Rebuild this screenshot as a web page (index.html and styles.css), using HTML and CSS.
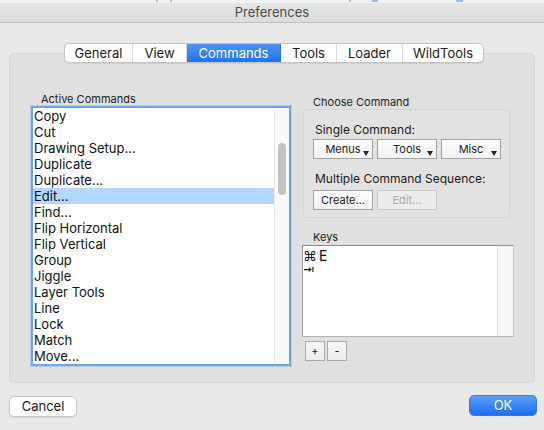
FILE: index.html
```html
<!DOCTYPE html>
<html>
<head>
<meta charset="utf-8">
<link rel="stylesheet" href="styles.css">
</head>
<body>
<div class="strip">
  <span class="bit b1"></span><span class="bit b2"></span><span class="bit b3"></span><span class="bit b4"></span><span class="bit b5"></span>
</div>
<div class="titlebar">Preferences</div>
<div class="tabs">
  <div class="tab t-general">General</div>
  <div class="tab t-view">View</div>
  <div class="tab t-commands active">Commands</div>
  <div class="tab t-tools">Tools</div>
  <div class="tab t-loader">Loader</div>
  <div class="tab t-wild">WildTools</div>
</div>
<div class="panel">
  <div class="col-left">
    <div class="label label-left">Active Commands</div>
    <div class="list">
      <div class="items">
        <div class="row">Copy</div>
        <div class="row">Cut</div>
        <div class="row">Drawing Setup...</div>
        <div class="row">Duplicate</div>
        <div class="row">Duplicate...</div>
        <div class="row selected">Edit...</div>
        <div class="row">Find...</div>
        <div class="row">Flip Horizontal</div>
        <div class="row">Flip Vertical</div>
        <div class="row">Group</div>
        <div class="row">Jiggle</div>
        <div class="row">Layer Tools</div>
        <div class="row">Line</div>
        <div class="row">Lock</div>
        <div class="row">Match</div>
        <div class="row">Move...</div>
      </div>
      <div class="scroll"><div class="thumb"></div></div>
    </div>
  </div>
  <div class="col-right">
    <div class="label label-right">Choose Command</div>
    <div class="choose-box">
      <div class="sublabel">Single Command:</div>
      <div class="btn-row">
        <div class="btn popup"><span class="ptext">Menus</span><span class="arrow"></span></div>
        <div class="btn popup"><span class="ptext">Tools</span><span class="arrow"></span></div>
        <div class="btn popup"><span class="ptext">Misc</span><span class="arrow"></span></div>
      </div>
      <div class="sublabel sub2">Multiple Command Sequence:</div>
      <div class="btn-row btn-row2">
        <div class="btn">Create...</div>
        <div class="btn disabled">Edit...</div>
      </div>
    </div>
    <div class="label label-right keys-label">Keys</div>
    <div class="keys-box">
      <div class="keys-items">
        <div class="key-row"><span class="cmd">⌘</span>E</div>
        <div class="key-row small">⇥</div>
      </div>
      <div class="keys-scroll"></div>
    </div>
    <div class="pm">
      <div class="btn sq">+</div>
      <div class="btn sq">-</div>
    </div>
  </div>
</div>
<div class="footer">
  <div class="fbtn cancel">Cancel</div>
  <div class="fbtn ok">OK</div>
</div>
</body>
</html>
```
FILE: styles.css
```css
* { box-sizing: border-box; }
html, body { margin: 0; padding: 0; }
body {
  width: 544px;
  height: 430px;
  background: #e9e9e9;
  font-family: Inter, "Noto Sans", "Liberation Sans", sans-serif;
  color: #1a1a1a;
  overflow: hidden;
}
.strip {
  height: 3px;
  background: #f1f3f5;
  display: flex;
  align-items: flex-start;
}
.bit { height: 2px; background: #9dbde4; display: block; }
.b1 { width: 2px; margin-left: 156px; }
.b2 { width: 2px; margin-left: 12px; }
.b3 { width: 2px; margin-left: 177px; }
.b4 { width: 6px; margin-left: 21px; }
.b5 { width: 7px; margin-left: 78px; }
.titlebar {
  height: 20px;
  background: linear-gradient(#e6e6e6, #dcdcdc);
  border-bottom: 1px solid #bfbfbf;
  text-align: center;
  font-size: 13px;
  line-height: 19px;
  color: #4b4b4b;
}
.tabs {
  margin-top: 20px;
  margin-left: 64px;
  display: flex;
  width: 420px;
  height: 20px;
  background: #fff;
  border: 1px solid #c3c3c3;
  border-radius: 5px;
  box-shadow: 0 1px 1px rgba(0,0,0,0.08);
  position: relative;
  z-index: 2;
  overflow: hidden;
}
.tab {
  font-size: 13px;
  line-height: 18px;
  text-align: center;
  border-right: 1px solid #dadada;
  color: #1b1b1b;
}
.tab:last-child { border-right: none; }
.t-general { width: 68px; }
.t-view { width: 54px; }
.t-commands { width: 94px; }
.t-tools { width: 56px; }
.t-loader { width: 66px; }
.t-wild { flex: 1; }
.tab.active {
  background: linear-gradient(#4d95f8, #2072f1);
  color: #fff;
  border-right-color: #2a72e0;
}
.panel {
  margin: -10px 9px 0;
  height: 330px;
  background: #e0e0e0;
  border: 1px solid #d6d6d6;
  border-radius: 5px;
  padding: 38px 0 0 21px;
  display: flex;
  gap: 11px;
}
.col-left { width: 260px; }
.col-right { width: 212px; }
.label {
  font-size: 11px;
  line-height: 14px;
  height: 14px;
  color: #1e1e1e;
}
.label-left { padding-left: 10px; }
.label-right { padding-left: 11px; margin-top: 3px; }
.list {
  height: 260px;
  background: #fff;
  border: 2px solid #6ea4ec;
  box-shadow: 0 0 0 1px #b3cdf0;
  display: flex;
}
.items { flex: 1; }
.row {
  height: 16px;
  font-size: 13px;
  line-height: 16px;
  padding-left: 1px;
  color: #111;
}
.row.selected { background: #b3d7ff; }
.scroll {
  width: 15px;
  background: #fafafa;
  border-left: 1px solid #e6e6e6;
  padding: 35px 0 0 3px;
}
.thumb {
  width: 8px;
  height: 52px;
  background: #c2c2c2;
  border-radius: 4px;
}
.choose-box {
  margin-left: 1px;
  width: 207px;
  height: 109px;
  border: 1px solid #d4d4d4;
  border-radius: 4px;
  background: #e2e2e2;
  padding: 13px 0 0 9px;
}
.sublabel {
  font-size: 12px;
  line-height: 14px;
  height: 14px;
  padding-left: 2px;
  color: #1b1b1b;
}
.sub2 { margin-top: 13px; }
.btn-row {
  margin-top: 2px;
  display: flex;
  gap: 4px;
}
.btn-row2 { margin-top: 4px; }
.btn {
  width: 60px;
  height: 20px;
  border: 1px solid #a3a3a3;
  background: linear-gradient(#fefefe, #f2f2f2);
  font-size: 11px;
  line-height: 18px;
  text-align: center;
  color: #1b1b1b;
}
.btn.disabled {
  border-color: #c9c9c9;
  background: #ececec;
  color: #a9a9a9;
}
.popup {
  display: flex;
  padding-left: 9px;
  padding-right: 3px;
}
.ptext { flex: 1; text-align: center; }
.arrow {
  width: 0;
  height: 0;
  border-left: 3.5px solid transparent;
  border-right: 3.5px solid transparent;
  border-top: 5px solid #222;
  margin-top: 11px;
}
.keys-label { margin-top: 12px; }
.keys-box {
  margin-top: 1px;
  height: 92px;
  background: #fff;
  border-top: 1px solid #8d8d8d;
  border-left: 1px solid #9a9a9a;
  border-right: 1px solid #c4c4c4;
  border-bottom: 1px solid #b4b4b4;
  display: flex;
}
.keys-items { flex: 1; padding-top: 1px; }
.key-row {
  font-size: 14px;
  line-height: 17px;
  height: 16px;
  color: #111;
}
.cmd { font-size: 14px; margin-right: 2px; }
.key-row.small { font-size: 11px; font-weight: 600; line-height: 14px; }
.keys-scroll {
  width: 16px;
  background: #f6f6f6;
  border-left: 1px solid #e4e4e4;
}
.pm {
  margin-top: 4px;
  margin-left: 3px;
  display: flex;
  gap: 2px;
}
.btn.sq {
  width: 20px;
  height: 20px;
  border-color: #ababab;
  background: linear-gradient(#f6f6f6, #ececec);
  font-size: 11px;
  line-height: 18px;
}
.footer {
  margin-top: 13px;
  padding: 0 7px 0 9px;
  display: flex;
  justify-content: space-between;
}
.fbtn {
  width: 68px;
  height: 21px;
  border-radius: 5px;
  font-size: 13px;
  line-height: 19px;
  text-align: center;
}
.cancel {
  background: #fff;
  border: 1px solid #c6c6c6;
  box-shadow: 0 1px 1px rgba(0,0,0,0.08);
  color: #1b1b1b;
}
.ok {
  background: linear-gradient(#5b9ff8, #1b6ef1);
  border: 1px solid #2f7ae8;
  color: #fff;
  margin-top: -1px;
}
```
